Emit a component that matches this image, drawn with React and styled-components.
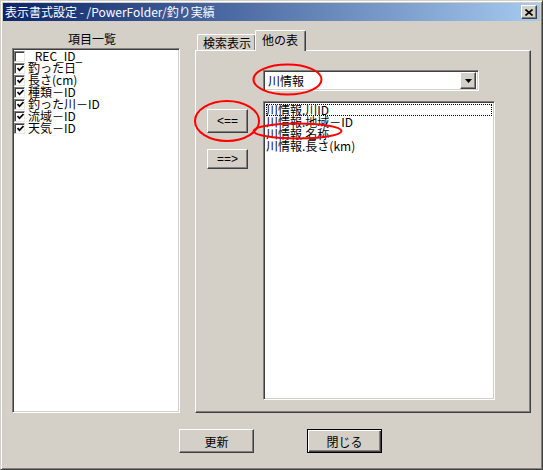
import React from 'react';
import styled, { createGlobalStyle, css } from 'styled-components';

const GlobalStyle = createGlobalStyle`
  html, body { margin: 0; padding: 0; background: #d4d0c8; }
  body { font-family: "Noto Sans CJK JP", "DejaVu Sans", sans-serif; font-size: 12px; color: #000; }
  * { box-sizing: border-box; }
`;

const sunken = css`
  border: 1px solid;
  border-color: #808080 #fff #fff #808080;
  box-shadow: inset 1px 1px #404040, inset -1px -1px #d4d0c8;
`;

const raised = css`
  border: 1px solid;
  border-color: #fff #404040 #404040 #fff;
  box-shadow: inset -1px -1px #808080;
`;

const leftItems = [
  { label: '_REC_ID_', checked: false },
  { label: '釣った日', checked: true },
  { label: '長さ(cm)', checked: true },
  { label: '種類－ID', checked: true },
  { label: '釣った川－ID', checked: true },
  { label: '流域－ID', checked: true },
  { label: '天気－ID', checked: true },
];

const rightItems = ['川情報.川ID', '川情報.地域－ID', '川情報.名称', '川情報.長さ(km)'];

function App() {
  return (
    <>
      <GlobalStyle />
      <Window>
        <TitleBar>
          <TitleText>表示書式設定 - /PowerFolder/釣り実績</TitleText>
          <CloseButton>
            <svg width="8" height="7" viewBox="0 0 8 7">
              <path d="M0.5 0.5 L7.5 6.5 M7.5 0.5 L0.5 6.5" stroke="#000" strokeWidth="1.6" />
            </svg>
          </CloseButton>
        </TitleBar>

        <Main>
          <LeftColumn>
            <ColumnLabel>項目一覧</ColumnLabel>
            <CheckList>
              {leftItems.map((it) => (
                <CheckRow key={it.label}>
                  <CheckBox>
                    {it.checked && (
                      <svg width="7" height="7" viewBox="0 0 7 7">
                        <path d="M0.5 3 L2.5 5.3 L6.5 1" fill="none" stroke="#000" strokeWidth="1.7" />
                      </svg>
                    )}
                  </CheckBox>
                  <span>{it.label}</span>
                </CheckRow>
              ))}
            </CheckList>
          </LeftColumn>

          <TabArea>
            <TabStrip>
              <Tab>検索表示</Tab>
              <Tab $active>他の表</Tab>
            </TabStrip>
            <Panel>
              <ComboRow>
                <Combo>
                  <ComboText>川情報</ComboText>
                  <ComboArrow>
                    <svg width="7" height="4" viewBox="0 0 7 4">
                      <path d="M0 0 H7 L3.5 4 Z" fill="#000" />
                    </svg>
                  </ComboArrow>
                </Combo>
              </ComboRow>
              <ListRow>
                <ButtonColumn>
                  <SmallButton $h={24}>&lt;==</SmallButton>
                  <SmallButton $h={20}>==&gt;</SmallButton>
                </ButtonColumn>
                <FieldList>
                  {rightItems.map((t, i) => (
                    <FieldRow key={t} $focus={i === 0}>{t}</FieldRow>
                  ))}
                </FieldList>
              </ListRow>
            </Panel>
          </TabArea>
        </Main>

        <Footer>
          <DialogButton>更新</DialogButton>
          <DialogButton $default>閉じる</DialogButton>
        </Footer>

        <Marks width="543" height="470" viewBox="0 0 543 470">
          <ellipse cx="287.5" cy="79.5" rx="34" ry="15" />
          <ellipse cx="227" cy="121" rx="32" ry="20" />
          <ellipse cx="297.5" cy="131" rx="44" ry="7.5" />
        </Marks>
      </Window>
    </>
  );
}

const Window = styled.div`
  position: relative;
  width: 543px;
  height: 470px;
  padding: 2px;
  background: #d4d0c8;
  border: 1px solid;
  border-color: #d4d0c8 #404040 #404040 #d4d0c8;
  box-shadow: inset 1px 1px #fff, inset -1px -1px #808080;
`;

const TitleBar = styled.div`
  display: flex;
  align-items: center;
  justify-content: space-between;
  height: 18px;
  padding: 0 3px 0 2px;
  background: linear-gradient(to right, #0a246a, #a6caf0);
`;

const TitleText = styled.span`
  color: #fff;
  font-size: 12px;
  line-height: 18px;
  white-space: nowrap;
`;

const CloseButton = styled.div`
  ${raised};
  width: 16px;
  height: 14px;
  background: #d4d0c8;
  display: flex;
  align-items: center;
  justify-content: center;
`;

const Main = styled.div`
  display: flex;
  gap: 15px;
  padding: 9px 9px 0 9px;
`;

const LeftColumn = styled.div`
  display: flex;
  flex-direction: column;
  width: 168px;
`;

const ColumnLabel = styled.div`
  height: 18px;
  line-height: 18px;
  text-align: center;
  padding-right: 8px;
`;

const CheckList = styled.div`
  ${sunken};
  height: 365px;
  background: #fff;
  padding: 1px 0 0 1px;
`;

const CheckRow = styled.div`
  display: flex;
  align-items: center;
  gap: 3px;
  height: 12px;
  line-height: 12px;
  white-space: nowrap;
`;

const CheckBox = styled.span`
  display: flex;
  align-items: center;
  justify-content: center;
  width: 11px;
  height: 11px;
  background: #fff;
  border: 1px solid;
  border-color: #808080 #e8e8e8 #e8e8e8 #808080;
  box-shadow: inset 1px 1px #404040;
  padding: 1px 0 0 1px;
`;

const TabArea = styled.div`
  display: flex;
  flex-direction: column;
  width: 336px;
`;

const TabStrip = styled.div`
  display: flex;
  align-items: flex-end;
  height: 20px;
  padding-left: 2px;
`;

const Tab = styled.div`
  position: relative;
  height: ${(p) => (p.$active ? '21px' : '16px')};
  margin-bottom: ${(p) => (p.$active ? '-1px' : '0')};
  margin-left: ${(p) => (p.$active ? '-1px' : '0')};
  z-index: ${(p) => (p.$active ? 1 : 0)};
  width: ${(p) => (p.$active ? '51px' : '59px')};
  padding-left: ${(p) => (p.$active ? '6px' : '5px')};
  line-height: ${(p) => (p.$active ? '18px' : '15px')};
  background: #d4d0c8;
  border-top: 1px solid #fff;
  border-left: 1px solid #fff;
  border-right: 1px solid #404040;
  border-radius: 2px 2px 0 0;
  box-shadow: inset -1px 0 #808080;
  white-space: nowrap;
`;

const Panel = styled.div`
  height: 363px;
  border: 1px solid;
  border-color: #fff #404040 #404040 #fff;
  box-shadow: inset -1px -1px #808080;
  padding: 19px 0 0 11px;
`;

const ComboRow = styled.div`
  padding-left: 56px;
`;

const Combo = styled.div`
  ${sunken};
  display: flex;
  align-items: center;
  justify-content: space-between;
  width: 216px;
  height: 21px;
  background: #fff;
  padding: 2px;
`;

const ComboText = styled.span`
  padding-left: 2px;
  line-height: 15px;
`;

const ComboArrow = styled.div`
  ${raised};
  width: 16px;
  height: 17px;
  background: #d4d0c8;
  display: flex;
  align-items: center;
  justify-content: center;
`;

const ListRow = styled.div`
  display: flex;
  gap: 15px;
  margin-top: 10px;
`;

const ButtonColumn = styled.div`
  display: flex;
  flex-direction: column;
  gap: 16px;
  padding-top: 8px;
  width: 41px;
`;

const SmallButton = styled.div`
  ${raised};
  height: ${(p) => p.$h}px;
  display: flex;
  align-items: center;
  justify-content: center;
  background: #d4d0c8;
  font-family: "Liberation Sans", "Noto Sans CJK JP", sans-serif;
  font-size: 12px;
`;

const FieldList = styled.div`
  ${sunken};
  width: 232px;
  height: 299px;
  background: #fff;
  padding: 2px 2px 0 2px;
`;

const FieldRow = styled.div`
  height: 12px;
  line-height: 12px;
  white-space: nowrap;
  ${(p) => p.$focus && css`
    outline: 1px dotted #000;
    outline-offset: -1px;
  `}
`;

const Footer = styled.div`
  display: flex;
  gap: 53px;
  padding: 16px 0 0 176px;
`;

const DialogButton = styled.div`
  width: 75px;
  height: 24px;
  display: flex;
  align-items: center;
  justify-content: center;
  background: #d4d0c8;
  ${(p) => (p.$default
    ? css`
        border: 1px solid #000;
        box-shadow: inset 1px 1px #fff, inset -1px -1px #404040, inset -2px -2px #808080;
      `
    : raised)};
`;

const Marks = styled.svg`
  position: absolute;
  top: -1px;
  left: -1px;
  pointer-events: none;
  ellipse {
    fill: none;
    stroke: #ff0000;
    stroke-width: 2;
  }
`;

export default App;
